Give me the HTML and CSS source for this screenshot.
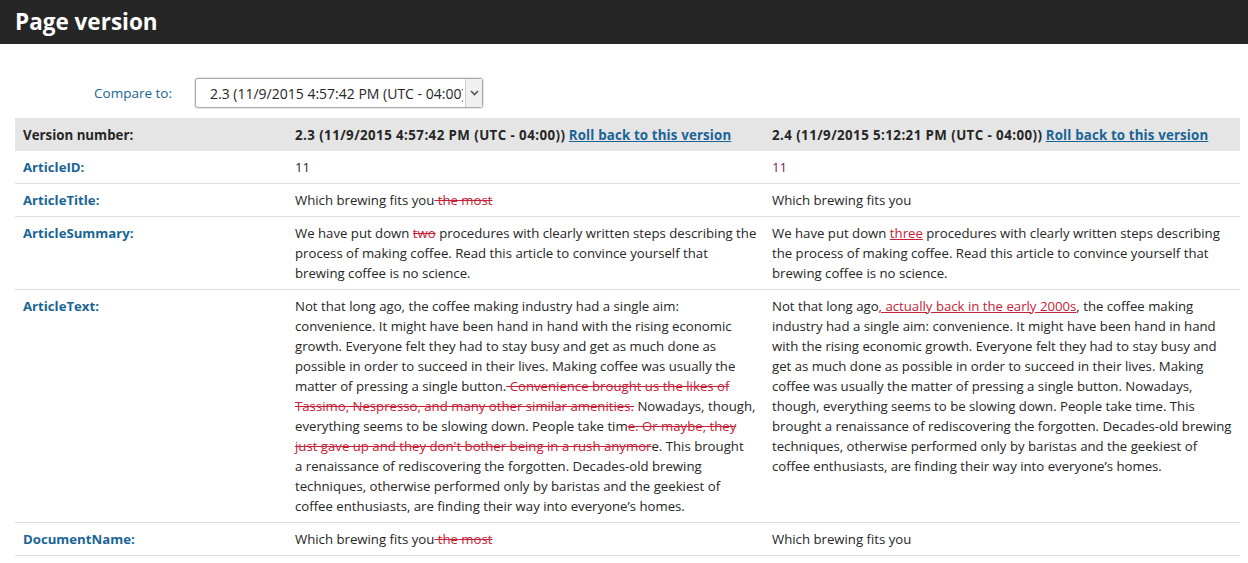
FILE: index.html
```html
<!DOCTYPE html>
<html>
<head>
<meta charset="utf-8">
<title>Page version</title>
<link rel="stylesheet" href="styles.css">
</head>
<body>
<header class="topbar"><h1>Page version</h1></header>
<main class="content">
  <div class="compare">
    <label class="compare-label" for="cmp">Compare to:</label>
    <div class="select-wrap">
      <select id="cmp" class="select">
        <option>2.3 (11/9/2015 4:57:42 PM (UTC - 04:00))</option>
      </select>
      <span class="select-arrow"><svg width="9" height="6" viewBox="0 0 9 6"><path d="M1 1 L4.5 4.5 L8 1" fill="none" stroke="#555" stroke-width="1.6"/></svg></span>
    </div>
  </div>
  <table class="versions">
    <colgroup><col class="c1"><col class="c2"><col class="c3"></colgroup>
    <thead>
      <tr>
        <th>Version number:</th>
        <th><span class="ver">2.3 (11/9/2015 4:57:42 PM (UTC - 04:00))</span> <a href="#">Roll back to this version</a></th>
        <th><span class="ver">2.4 (11/9/2015 5:12:21 PM (UTC - 04:00))</span> <a href="#">Roll back to this version</a></th>
      </tr>
    </thead>
    <tbody>
      <tr>
        <td class="field">ArticleID:</td>
        <td>11</td>
        <td class="visited">11</td>
      </tr>
      <tr>
        <td class="field">ArticleTitle:</td>
        <td>Which brewing fits you<del> the most</del></td>
        <td>Which brewing fits you</td>
      </tr>
      <tr>
        <td class="field">ArticleSummary:</td>
        <td>We have put down <del>two</del> procedures with clearly written steps describing the process of making coffee. Read this article to convince yourself that brewing coffee is no science.</td>
        <td>We have put down <ins>three</ins> procedures with clearly written steps describing the process of making coffee. Read this article to convince yourself that brewing coffee is no science.</td>
      </tr>
      <tr>
        <td class="field">ArticleText:</td>
        <td>Not that long ago, the coffee making industry had a single aim: convenience. It might have been hand in hand with the rising economic growth. Everyone felt they had to stay busy and get as much done as possible in order to succeed in their lives. Making coffee was usually the matter of pressing a single button.<del> Convenience brought us the likes of Tassimo, Nespresso, and many other similar amenities.</del> Nowadays, though, everything seems to be slowing down. People take tim<del>e. Or maybe, they just gave up and they don't bother being in a rush anymor</del>e. This brought a&nbsp;renaissance of rediscovering the forgotten. Decades-old brewing techniques, otherwise performed only by baristas and the geekiest of coffee enthusiasts, are finding their way into everyone’s homes.</td>
        <td>Not that long ago<ins>, actually back in the early 2000s</ins>, the coffee making industry had a single aim: convenience. It might have been hand in hand with the rising economic growth. Everyone felt they had to stay busy and get as much done as possible in order to succeed in their lives. Making coffee was usually the matter of pressing a single button. Nowadays, though, everything seems to be slowing down. People take time. This brought a renaissance of rediscovering the forgotten. Decades-old brewing techniques, otherwise performed only by baristas and the geekiest of coffee enthusiasts, are finding their way into everyone’s homes.</td>
      </tr>
      <tr>
        <td class="field">DocumentName:</td>
        <td>Which brewing fits you<del> the most</del></td>
        <td>Which brewing fits you</td>
      </tr>
    </tbody>
  </table>
</main>
</body>
</html>
```

FILE: styles.css
```css
* { box-sizing: border-box; }
html, body { margin: 0; padding: 0; background: #fff; }
body {
  font-family: "Open Sans", "Noto Sans", sans-serif;
  font-size: 13.2px;
  line-height: 20px;
  color: #262626;
}
.topbar {
  background: #262626;
  height: 44px;
  padding: 0 15px;
  display: flex;
  align-items: center;
}
.topbar h1 {
  margin: 0;
  color: #fff;
  font-size: 22.5px;
  font-weight: 700;
  line-height: 44px;
}
.content {
  padding: 34px 8px 0 15px;
}
.compare {
  display: flex;
  align-items: center;
  height: 30px;
}
.compare-label {
  width: 157px;
  text-align: right;
  color: #1a6496;
  font-size: 13.5px;
  margin-right: 23px;
}
.select-wrap {
  position: relative;
  width: 288px;
  height: 30px;
}
.select {
  appearance: none;
  -webkit-appearance: none;
  width: 100%;
  height: 30px;
  border: 1px solid #a9a9a9;
  border-radius: 3px;
  background: #fff;
  font-family: inherit;
  font-size: 14px;
  color: #262626;
  padding: 0 19px 0 14px;
  box-shadow: 0 0 0 1px #e6e6e6;
}
.select-arrow {
  position: absolute;
  right: 1px;
  top: 1px;
  bottom: 1px;
  width: 17px;
  border-left: 1px solid #cfcfcf;
  background: #f0f0f0;
  display: flex;
  align-items: center;
  justify-content: center;
  pointer-events: none;
}
.versions {
  margin-top: 10px;
  width: 1225px;
  border-collapse: collapse;
  table-layout: fixed;
}
.c1 { width: 272px; }
.c2 { width: 477px; }
.c3 { width: 476px; }
.versions th {
  background: #e5e5e5;
  font-weight: 700;
  font-size: 13.3px;
  text-align: left;
  padding: 6px 8px;
  height: 33px;
  white-space: nowrap;
}
.versions th .ver { letter-spacing: 0.43px; }
.versions th a {
  color: #1a6496;
  text-decoration: underline;
  letter-spacing: 0.15px;
}
.versions td {
  vertical-align: top;
  padding: 6px 5px 6px 8px;
  border-bottom: 1px solid #ddd;
}
.versions td.field {
  color: #1a6496;
  font-weight: 700;
}
.versions td.visited { color: #6b2470; }
del {
  color: #c62136;
  text-decoration: line-through;
}
ins {
  color: #c62136;
  text-decoration: underline;
}
```
